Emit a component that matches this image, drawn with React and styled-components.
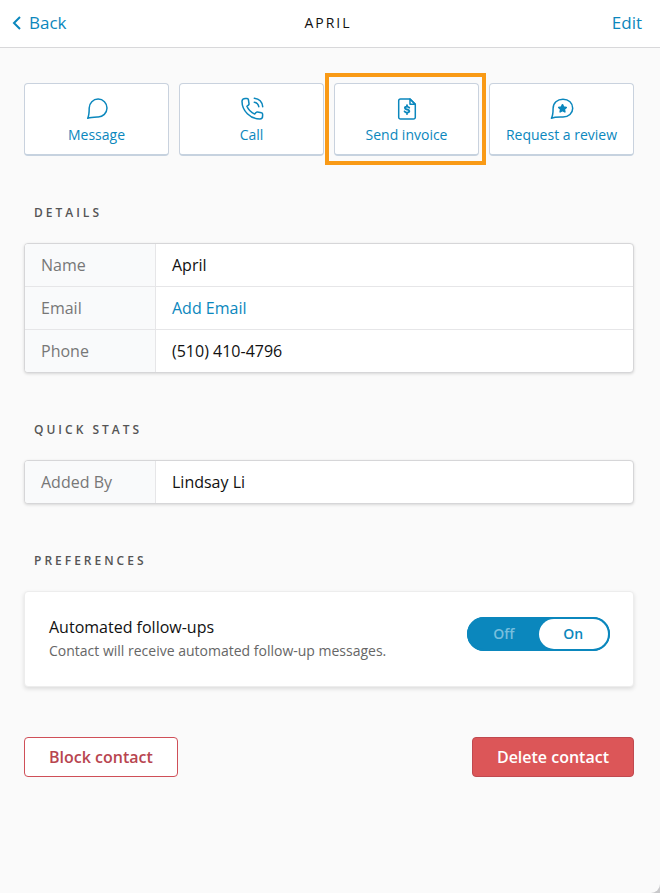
import React, { useState } from 'react';
import styled, { createGlobalStyle, css } from 'styled-components';

const blue = '#0b87bd';
const red = '#dc5658';

const GlobalStyle = createGlobalStyle`
  * {
    box-sizing: border-box;
  }

  body {
    margin: 0;
    background-color: #c9c9cb;
    color: #111;
    font-family: 'Open Sans', 'Noto Sans', sans-serif;
    font-size: 16px;
    line-height: 24px;
  }

  button {
    font-family: inherit;
    cursor: pointer;
  }
`;

const Page = styled.div`
  min-height: 100vh;
  background-color: #fafafa;
  border-bottom-right-radius: 9px;
`;

const Header = styled.header`
  display: grid;
  grid-template-columns: 1fr auto 1fr;
  align-items: center;
  height: 48px;
  padding: 0 16px 2px 12px;
  background-color: #fff;
  border-bottom: 1px solid #d8d8da;
`;

const HeaderLink = styled.a`
  display: flex;
  align-items: center;
  gap: 8px;
  justify-self: ${(props) => (props.$end ? 'end' : 'start')};
  padding-right: 2px;
  color: ${blue};
  font-size: 17px;
  text-decoration: none;
`;

const HeaderTitle = styled.h1`
  margin: 0;
  font-size: 14px;
  font-weight: 400;
  letter-spacing: 2px;
  text-transform: uppercase;
`;

const Content = styled.main`
  padding: 35px 26px 24px 24px;
`;

const Actions = styled.div`
  display: grid;
  grid-template-columns: repeat(4, 1fr);
  gap: 10px;
`;

const ActionButton = styled.button`
  position: relative;
  display: flex;
  flex-direction: column;
  align-items: center;
  gap: 2px;
  height: 73px;
  padding: 13px 0 0;
  background-color: #fff;
  border: 1px solid #c9d2de;
  border-bottom: 2px solid #c6d2df;
  border-radius: 4px;
  color: ${blue};
  font-size: 14px;
  line-height: 24px;

  ${(props) =>
    props.$highlighted &&
    css`
      &::after {
        content: '';
        position: absolute;
        inset: -11px -8px -11px -10px;
        border: 4px solid #f99a16;
      }
    `}
`;

const SectionTitle = styled.h2`
  margin: 0;
  padding: 0 10px;
  color: #555;
  font-size: 12px;
  font-weight: 600;
  line-height: 20px;
  letter-spacing: 3px;
  text-transform: uppercase;
`;

const Section = styled.section`
  display: flex;
  flex-direction: column;
  gap: 20px;
  margin-top: 47px;
`;

const Card = styled.div`
  overflow: hidden;
  background-color: #fff;
  border: 1px solid #d6d6d8;
  border-radius: 4px;
  box-shadow: 0 1px 3px rgba(0, 0, 0, 0.14);
`;

const InfoTable = styled.table`
  width: 100%;
  border-collapse: separate;
  border-spacing: 0;

  th,
  td {
    height: 43px;
    padding: 0 16px;
    border-bottom: 1px solid #e6e6e8;
    font-weight: 400;
    text-align: left;
  }

  th {
    width: 131px;
    background-color: #f9fafb;
    border-right: 1px solid #e6e6e8;
    color: #777;
  }

  tr:last-child th,
  tr:last-child td {
    height: 42px;
    border-bottom: 0;
  }
`;

const TextLink = styled.a`
  color: ${blue};
  text-decoration: none;
`;

const PreferenceCard = styled.div`
  display: flex;
  align-items: flex-start;
  justify-content: space-between;
  gap: 16px;
  padding: 23px 23px 23px 24px;
  background-color: #fff;
  border: 1px solid #ededed;
  border-radius: 4px;
  box-shadow: 0 2px 4px rgba(0, 0, 0, 0.12);
`;

const PreferenceName = styled.div`
  line-height: 24px;
`;

const PreferenceText = styled.div`
  color: #666;
  font-size: 14px;
  line-height: 24px;
`;

const Toggle = styled.fieldset`
  display: flex;
  flex: none;
  width: 143px;
  height: 34px;
  margin: 2px 0 0;
  padding: 0;
  background-color: ${blue};
  border: 2px solid ${blue};
  border-radius: 17px;
`;

const ToggleOption = styled.label`
  position: relative;
  display: flex;
  flex: 1;
  align-items: center;
  justify-content: center;
  background-color: ${(props) => (props.$active ? '#fff' : 'transparent')};
  border-radius: 15px;
  color: ${(props) => (props.$active ? blue : '#78bfdd')};
  font-size: 14px;
  font-weight: 600;
  cursor: pointer;

  input {
    position: absolute;
    inset: 0;
    width: 100%;
    height: 100%;
    margin: 0;
    opacity: 0;
    cursor: pointer;
  }
`;

const Footer = styled.div`
  display: flex;
  justify-content: space-between;
  margin-top: 50px;
`;

const DangerButton = styled.button`
  height: 40px;
  padding: 0 24px;
  background-color: ${(props) => (props.$filled ? red : '#fff')};
  border: 1px solid ${(props) => (props.$filled ? '#c0494f' : '#cf4f58')};
  border-radius: 4px;
  color: ${(props) => (props.$filled ? '#fff' : '#b8454f')};
  font-size: 16px;
  font-weight: 600;
`;

const Icon = ({ children }) => (
  <svg
    width='24'
    height='24'
    viewBox='0 0 24 24'
    fill='none'
    stroke='currentColor'
    strokeWidth='1.5'
    strokeLinecap='round'
    strokeLinejoin='round'
    aria-hidden='true'
  >
    {children}
  </svg>
);

const MessageIcon = () => (
  <Icon>
    <path d='M2.700 21.300C4.100 18.600 4.200 15 4.200 11A8.900 8.900 0 1 1 13 19.900C9.500 20 6 20 2.700 21.300z' />
  </Icon>
);

const CallIcon = () => (
  <Icon>
    <path d='M2 4.200C2 2.300 3.600 1.500 5.200 1.500h1.900c.7 0 1.200.4 1.300 1.100l.6 4c.1.6-.1 1.100-.6 1.500L6.900 9.300c1.500 3.500 4.200 6.200 7.800 7.800l1.300-1.500c.4-.5.9-.7 1.500-.6l4 .7c.7.1 1.100.6 1.100 1.300v2c0 1.600-1 3-2.700 3C10.300 22 2 13.700 2 4.200z' />
    <path d='M14.300 5.200c2.500.4 4.100 2 4.500 4.500' />
    <path d='M14.300 1.300c4.700.5 7.900 3.700 8.400 8.400' />
  </Icon>
);

const InvoiceIcon = () => (
  <Icon>
    <path d='M5.500 2h9.500l5.300 5.300v12.900a1.800 1.800 0 0 1-1.800 1.800h-13a1.800 1.800 0 0 1-1.800-1.800V3.800A1.800 1.800 0 0 1 5.500 2z' />
    <path d='M15 2v5.300h5.300z' />
    <path
      d='M14.200 10.700c-.4-.8-1.200-1.100-2.200-1.100-1.200 0-2.100.5-2.100 1.400 0 2 4.400 1 4.400 3.100 0 1-1 1.500-2.300 1.500-1.100 0-2-.4-2.400-1.200M12 8.200v1.400M12 15.600V17'
      strokeWidth='1.900'
    />
  </Icon>
);

const ReviewIcon = () => (
  <Icon>
    <path d='M1.400 21.300C2.900 18.600 3.100 15.500 3.100 11.500 3.100 6 7.300 2.200 13 2.200s9.700 3.900 9.700 9-4.100 8.900-9.700 8.900c-4 0-8-.3-11.600 1.200z' />
    <path
      d='M12.500 7.700l1.200 2.400 2.600.3-1.900 1.900.5 2.600-2.400-1.200-2.400 1.200.5-2.600-1.900-1.900 2.600-.3z'
      fill='currentColor'
    />
  </Icon>
);

const actions = [
  { label: 'Message', icon: <MessageIcon /> },
  { label: 'Call', icon: <CallIcon /> },
  { label: 'Send invoice', icon: <InvoiceIcon />, highlighted: true },
  { label: 'Request a review', icon: <ReviewIcon /> },
];

function App() {
  const [followUps, setFollowUps] = useState('On');

  return (
    <>
      <GlobalStyle />
      <Page>
        <Header>
          <HeaderLink href='#back'>
            <svg
              width='9'
              height='14'
              viewBox='0 0 9 14'
              fill='none'
              stroke='currentColor'
              strokeWidth='2'
              aria-hidden='true'
            >
              <path d='M8 1L2 7l6 6' />
            </svg>
            Back
          </HeaderLink>
          <HeaderTitle>April</HeaderTitle>
          <HeaderLink href='#edit' $end>
            Edit
          </HeaderLink>
        </Header>
        <Content>
          <Actions>
            {actions.map((action) => (
              <ActionButton
                key={action.label}
                type='button'
                $highlighted={action.highlighted}
              >
                {action.icon}
                {action.label}
              </ActionButton>
            ))}
          </Actions>
          <Section>
            <SectionTitle>Details</SectionTitle>
            <Card>
              <InfoTable>
                <tbody>
                  <tr>
                    <th scope='row'>Name</th>
                    <td>April</td>
                  </tr>
                  <tr>
                    <th scope='row'>Email</th>
                    <td>
                      <TextLink href='#email'>Add Email</TextLink>
                    </td>
                  </tr>
                  <tr>
                    <th scope='row'>Phone</th>
                    <td>(510) 410-4796</td>
                  </tr>
                </tbody>
              </InfoTable>
            </Card>
          </Section>
          <Section>
            <SectionTitle>Quick stats</SectionTitle>
            <Card>
              <InfoTable>
                <tbody>
                  <tr>
                    <th scope='row'>Added By</th>
                    <td>Lindsay Li</td>
                  </tr>
                </tbody>
              </InfoTable>
            </Card>
          </Section>
          <Section>
            <SectionTitle>Preferences</SectionTitle>
            <PreferenceCard>
              <div>
                <PreferenceName id='follow-ups'>Automated follow-ups</PreferenceName>
                <PreferenceText>
                  Contact will receive automated follow-up messages.
                </PreferenceText>
              </div>
              <Toggle aria-labelledby='follow-ups'>
                {['Off', 'On'].map((option) => (
                  <ToggleOption key={option} $active={followUps === option}>
                    <input
                      type='radio'
                      name='followUps'
                      value={option}
                      checked={followUps === option}
                      onChange={() => setFollowUps(option)}
                    />
                    {option}
                  </ToggleOption>
                ))}
              </Toggle>
            </PreferenceCard>
          </Section>
          <Footer>
            <DangerButton type='button'>Block contact</DangerButton>
            <DangerButton type='button' $filled>
              Delete contact
            </DangerButton>
          </Footer>
        </Content>
      </Page>
    </>
  );
}

export default App;
